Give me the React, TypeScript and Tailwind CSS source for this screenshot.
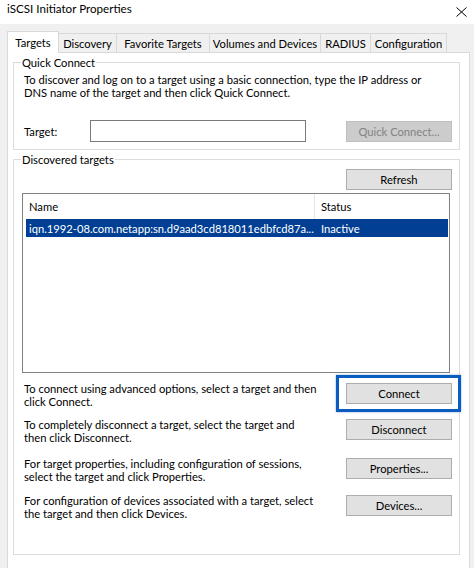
import React from "react";

const font = { fontFamily: 'Lato, "Noto Sans", sans-serif' };

function Btn({ children, disabled }: { children: React.ReactNode; disabled?: boolean }) {
  return (
    <div
      className={
        "flex-none w-[106px] h-[21px] flex items-center justify-center border text-[11.2px] leading-[13px] whitespace-nowrap " +
        (disabled
          ? "bg-[#cccccc] border-[#bfbfbf] text-[#838383]"
          : "bg-[#e1e1e1] border-[#adadad] text-black")
      }
    >
      {children}
    </div>
  );
}

export default function App() {
  const tabs = ["Discovery", "Favorite Targets", "Volumes and Devices", "RADIUS", "Configuration"];
  const widths = ["w-[58px]", "w-[93px]", "w-[111px]", "w-[50px]", "w-[76px]"];
  return (
    <div
      className="w-[474px] h-[568px] overflow-hidden bg-[#f0f0f0] text-black text-[11.2px] leading-[13px]"
      style={font}
    >
      {/* Title bar */}
      <div className="h-[24px] bg-white flex items-start justify-between pl-[7px] pr-[4px] pt-[2px]">
        <span className="text-[11.6px] leading-[14px]">iSCSI Initiator Properties</span>
        <svg width="11" height="10" viewBox="0 0 11 10" className="mt-[5px] mr-[3px]">
          <path d="M0.5 0.5 L10.5 9.5 M10.5 0.5 L0.5 9.5" stroke="#000" strokeWidth="1" fill="none" />
        </svg>
      </div>

      {/* Tabs */}
      <div className="pt-[7px] pl-[7px] flex items-end relative z-10 h-[29px]">
        <div className="flex-none w-[52px] h-[22px] bg-white border border-b-0 border-[#d9d9d9] flex items-center justify-center pb-[1px] whitespace-nowrap">
          Targets
        </div>
        {tabs.map((t, i) => (
          <div
            key={t}
            className={
              widths[i] +
              " flex-none h-[19px] border border-l-0 border-b-0 border-[#d9d9d9] bg-[#f0f0f0] flex items-center justify-center mb-[1px] whitespace-nowrap"
            }
          >
            {t}
          </div>
        ))}
      </div>

      {/* Panel */}
      <div className="ml-[7px] w-[463px] h-[600px] -mt-[1px] bg-white border border-[#d9d9d9] pl-[5px] pr-[9px] pt-[9px]">
        {/* Quick Connect */}
        <div className="relative border border-[#dcdcdc] h-[88px] pl-[10px] pt-[10px]">
          <span className="absolute left-[7px] -top-[7px] bg-white px-[1px] leading-[13px]">Quick Connect</span>
          <div className="whitespace-nowrap">
            To discover and log on to a target using a basic connection, type the IP address or
            <br />
            DNS name of the target and then click Quick Connect.
          </div>
          <div className="flex items-center mt-[21px]">
            <span className="w-[66px]">Target:</span>
            <div className="flex-none w-[216px] h-[22px] border border-[#7a7a7a] bg-white" />
            <div className="ml-[40px] mt-[1px]">
              <Btn disabled>Quick Connect...</Btn>
            </div>
          </div>
        </div>

        {/* Discovered targets */}
        <div className="relative border border-[#dcdcdc] mt-[9px] h-[396px] pt-[9px] pl-[8px]">
          <span className="absolute left-[7px] -top-[7px] bg-white px-[1px] leading-[13px]">Discovered targets</span>
          <div className="flex justify-end pr-[7px]">
            <Btn>Refresh</Btn>
          </div>
          {/* List */}
          <div className="mt-[3px] w-[428px] h-[180px] border border-[#828282] bg-white">
            <div className="h-[25px] flex items-center">
              <div className="w-[292px] h-full flex items-center pl-[6px] border-r border-[#e5e5e5]">Name</div>
              <div className="pl-[6px]">Status</div>
            </div>
            <div className="ml-[3px] mr-[1px] h-[18px] bg-[#003f93] text-white flex items-center">
              <div className="flex-none w-[289px] pl-[3px] whitespace-nowrap overflow-hidden">
                iqn.1992-08.com.netapp:sn.d9aad3cd818011edbfcd87a...
              </div>
              <div className="pl-[6px]">Inactive</div>
            </div>
          </div>

          {/* Action rows */}
          <div className="pl-[2px] pr-[7px]">
            <div className="flex justify-between items-start mt-[9px]">
              <div className="whitespace-nowrap">
                To connect using advanced options, select a target and then
                <br />
                click Connect.
              </div>
              <div className="relative mt-[1px]">
                <Btn>Connect</Btn>
                <div className="absolute -left-[10px] -top-[8px] -right-[9px] -bottom-[8px] border-[3px] border-[#0b5cbf] shadow-[0_0_2px_rgba(11,92,191,0.5)]" />
              </div>
            </div>
            <div className="flex justify-between items-start mt-[10px]">
              <div className="whitespace-nowrap">
                To completely disconnect a target, select the target and
                <br />
                then click Disconnect.
              </div>
              <div className="mt-[1px]">
                <Btn>Disconnect</Btn>
              </div>
            </div>
            <div className="flex justify-between items-start mt-[13px]">
              <div className="whitespace-nowrap">
                For target properties, including configuration of sessions,
                <br />
                select the target and click Properties.
              </div>
              <div className="mt-[1px]">
                <Btn>Properties...</Btn>
              </div>
            </div>
            <div className="flex justify-between items-start mt-[11px]">
              <div className="whitespace-nowrap">
                For configuration of devices associated with a target, select
                <br />
                the target and then click Devices.
              </div>
              <div className="mt-[1px]">
                <Btn>Devices...</Btn>
              </div>
            </div>
          </div>
        </div>
      </div>
    </div>
  );
}
